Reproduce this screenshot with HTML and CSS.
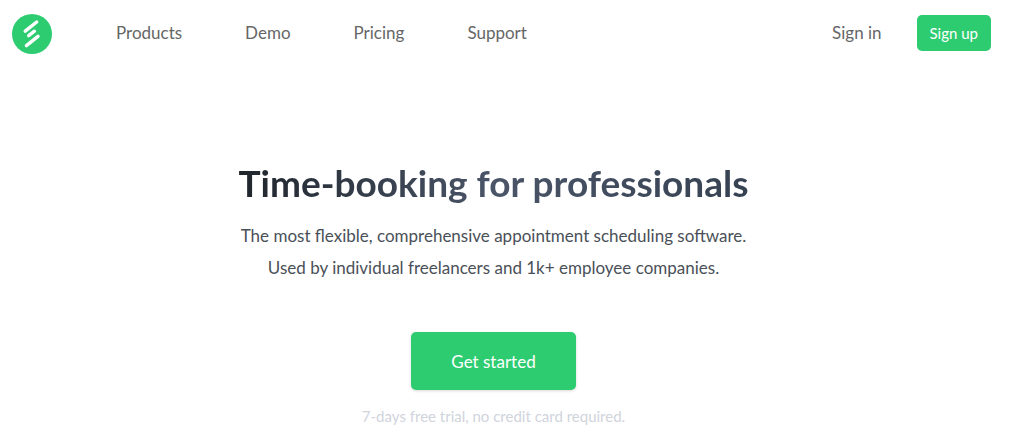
FILE: index.html
```
<!DOCTYPE html>
<html lang="en">
<head>
<meta charset="utf-8">
<meta name="viewport" content="width=device-width, initial-scale=1">
<title>Time-booking for professionals</title>
<link rel="stylesheet" href="styles.css">
</head>
<body>
<header class="header">
  <a class="logo" href="#" aria-label="Home">
    <svg viewBox="0 0 40 40" width="40" height="40" aria-hidden="true">
      <circle cx="20" cy="20" r="20" fill="#2ecc71"/>
      <path d="M13.2 17.2L24.7 8M16.7 21.7L22.4 17.2M14.4 31.6L26 22.3" stroke="#fff" stroke-width="3.4" stroke-linecap="round" fill="none"/>
    </svg>
  </a>
  <nav class="nav">
    <a href="#">Products</a>
    <a href="#">Demo</a>
    <a href="#">Pricing</a>
    <a href="#">Support</a>
  </nav>
  <div class="account">
    <a class="sign-in" href="#">Sign in</a>
    <button class="button sign-up" type="button">Sign up</button>
  </div>
</header>
<main class="hero">
  <h1 class="title">Time-booking for professionals</h1>
  <p class="lead">The most flexible, comprehensive appointment scheduling software.<br>Used by individual freelancers and 1k+ employee companies.</p>
  <button class="button start" type="button">Get started</button>
  <p class="note">7-days free trial, no credit card required.</p>
</main>
</body>
</html>
```
FILE: styles.css
```
* { box-sizing: border-box; }
body {
  margin: 0;
  background: #fff;
  color: #4a5058;
  font: 17px/24px Lato, "Open Sans", sans-serif;
}
a { color: #666; text-decoration: none; }
.header {
  display: flex;
  align-items: center;
  padding: 14px 20px 0 12px;
}
.logo { display: flex; }
.nav { display: flex; gap: 63px; margin-left: 64px; padding-bottom: 3px; }
.account {
  display: flex;
  align-items: center;
  gap: 35px;
  margin-left: auto;
  padding-bottom: 2px;
}
.button {
  border: 0;
  border-radius: 5px;
  background: #2ecc71;
  color: #fff;
  font-family: inherit;
  cursor: pointer;
}
.sign-up { padding: 0 13px; height: 36px; font-size: 15px; }
.hero {
  display: flex;
  flex-direction: column;
  align-items: center;
  padding: 105px 24px 16px 0;
  text-align: center;
}
.title {
  margin: 0 0 13px;
  font-size: 37px;
  line-height: 48px;
  font-weight: 700;
  background: linear-gradient(90deg, #1f252c, #4a5568 50%, #364152);
  background-clip: text;
  -webkit-background-clip: text;
  color: transparent;
}
.lead { margin: 0 0 48px; line-height: 32px; }
.start {
  padding: 0 40px;
  height: 58px;
  font-size: 17px;
  box-shadow: 0 1px 3px rgba(0, 0, 0, .15);
}
.note { margin: 16px 0 0; font-size: 15px; line-height: 20px; color: #d0d4dc; }
```
